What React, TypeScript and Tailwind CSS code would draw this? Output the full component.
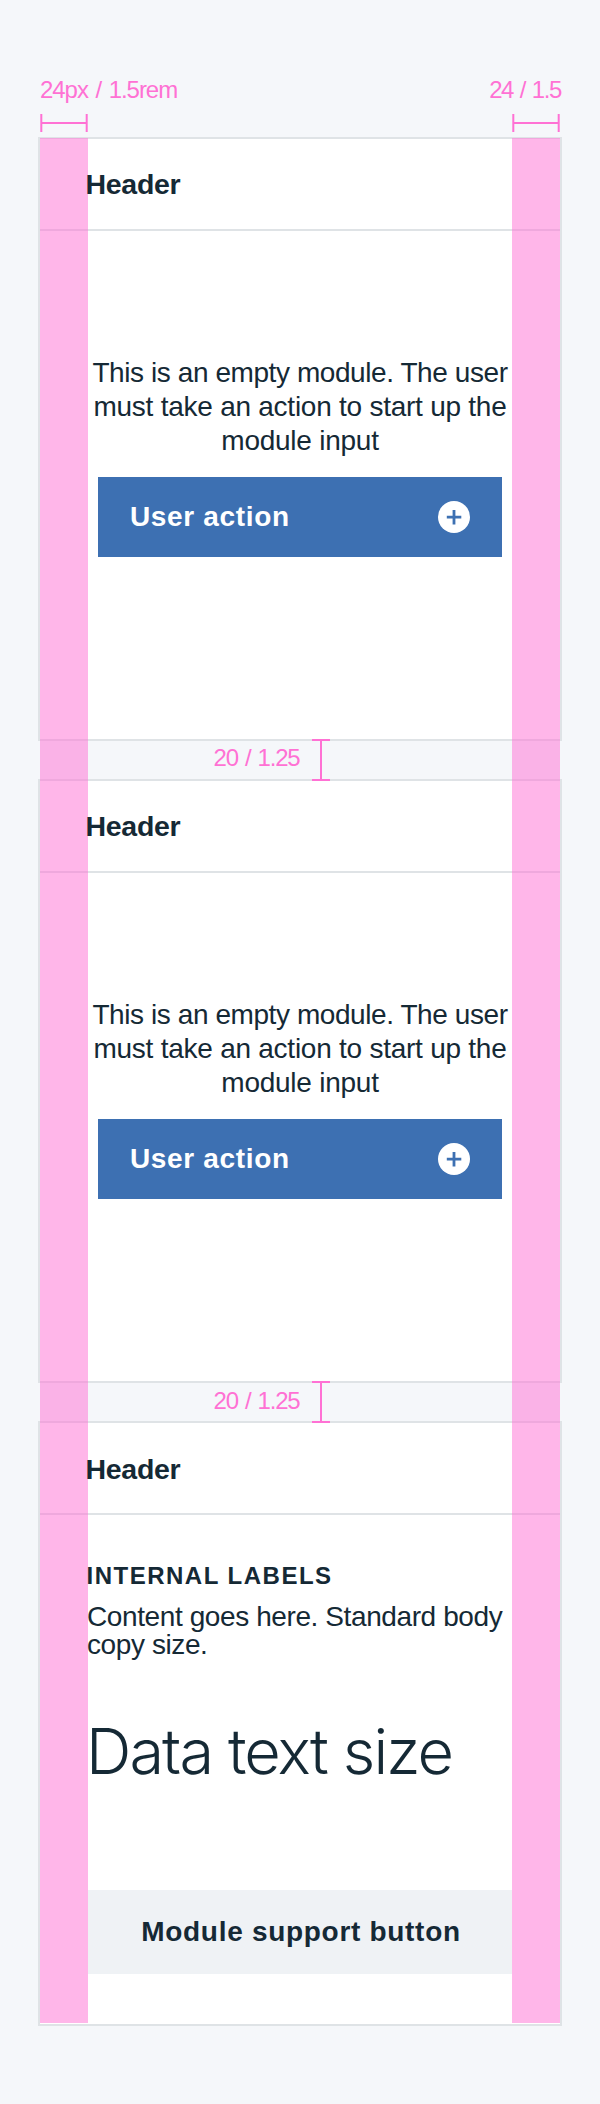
import React from "react";

type CardProps = {
  title: string;
  className?: string;
  headerClass?: string;
  children: React.ReactNode;
};

function Card({ title, className = "", headerClass = "pt-[31px]", children }: CardProps) {
  return (
    <section className={`w-[524px] border-2 border-[#dfe3e6] bg-white ${className}`}>
      <header className={`h-[92px] border-b-2 border-[#dfe3e6] pl-[45.5px] ${headerClass}`}>
        <h2 className="relative z-10 text-[28.5px] leading-[28px] font-bold tracking-[-0.3px]">{title}</h2>
      </header>
      {children}
    </section>
  );
}

function EmptyModule({ className = "" }: { className?: string }) {
  return (
    <Card title="Header" className={className}>
      <div className="flex flex-col items-center pt-[125px]">
        <p className="text-center text-[28px] leading-[34px] whitespace-nowrap">
          <span className="tracking-[-0.42px]">This is an empty module. The user</span>
          <br />
          <span className="tracking-[-0.25px]">must take an action to start up the</span>
          <br />
          <span className="tracking-[-0.25px]">module input</span>
        </p>
        <button className="mt-[19px] flex h-20 w-[404px] items-center justify-between bg-[#3d70b2] pr-8 pl-8 text-white">
          <span className="text-[28px] leading-[28px] font-bold tracking-[0.65px]">User action</span>
          <svg width="32" height="32" viewBox="0 0 32 32" aria-hidden="true">
            <circle cx="16" cy="16" r="16" fill="#fff" />
            <path d="M16 9v14.5M8.8 16.2h14.5" stroke="#3d70b2" strokeWidth="2.8" />
          </svg>
        </button>
      </div>
    </Card>
  );
}

function WidthMark() {
  return (
    <svg className="block" width="48" height="18" viewBox="0 0 48 18" fill="none" stroke="#ff71d4" strokeWidth="2" aria-hidden="true">
      <path d="M1.3 0v18M46.7 0v18M1.3 9h45.4" />
    </svg>
  );
}

function Gap({ labelClass }: { labelClass: string }) {
  return (
    <div className="relative z-10 flex h-[38px] text-[#ff71d4]">
      <span className={`ml-[175.5px] w-[98px] text-[24px] leading-[24px] tracking-[-1.2px] [word-spacing:1.7px] whitespace-nowrap ${labelClass}`}>
        20 / 1.25
      </span>
      <svg className="-mt-[2px] block h-[42px] w-[18px] shrink-0" viewBox="0 0 18 42" fill="none" stroke="#ff71d4" strokeWidth="2" aria-hidden="true">
        <path d="M0 1h18M0 41h18M9 1v40" />
      </svg>
    </div>
  );
}

export default function App() {
  return (
    <main className="relative h-[2104px] w-[600px] overflow-hidden bg-[#f5f7fa] px-[38px] pt-[77px] font-['Liberation_Sans',Arial,sans-serif] text-[#152935]">
      <div className="flex h-[60px] justify-between px-[2px] text-[24px] leading-[24px] text-[#ff71d4]">
        <div className="flex flex-col gap-[12px] pt-[1px]">
          <span className="tracking-[-1.05px] [word-spacing:2px]">24px / 1.5rem</span>
          <WidthMark />
        </div>
        <div className="flex flex-col items-end gap-[12px] pt-[1px]">
          <span className="-mr-[1px] tracking-[-1.4px] [word-spacing:1.5px]">24 / 1.5</span>
          <WidthMark />
        </div>
      </div>

      <EmptyModule className="h-[604px]" />
      <Gap labelClass="mt-[5px]" />
      <EmptyModule className="h-[604px]" />
      <Gap labelClass="mt-[6px]" />
      <Card title="Header" className="h-[605px]" headerClass="pt-[32px]">
        <div className="relative z-10 pl-12">
          <h3 className="-ml-[1.5px] pt-[49px] text-[24px] leading-[24px] font-bold tracking-[1.5px]">INTERNAL LABELS</h3>
          <p className="-ml-[1px] pt-[15px] text-[28px] leading-[28px] tracking-[-0.4px] whitespace-nowrap">
            Content goes here. Standard body
            <br />
            copy size.
          </p>
          <p className="mt-[57px] -ml-[2px] font-[Inter,sans-serif] text-[63px] leading-[70px] font-light tracking-[-1.9px] whitespace-nowrap">
            Data text size
          </p>
          <button className="mt-[104px] flex h-[84px] w-[424px] items-center justify-center bg-[#eff2f5] pl-[2px] text-[28px] leading-[28px] font-bold tracking-[0.7px]">
            Module support button
          </button>
        </div>
      </Card>

      <div className="absolute top-[138px] left-[40px] h-[1885px] w-12 bg-[#ff6dd3]/50" />
      <div className="absolute top-[138px] left-[512px] h-[1885px] w-12 bg-[#ff6dd3]/50" />
    </main>
  );
}
